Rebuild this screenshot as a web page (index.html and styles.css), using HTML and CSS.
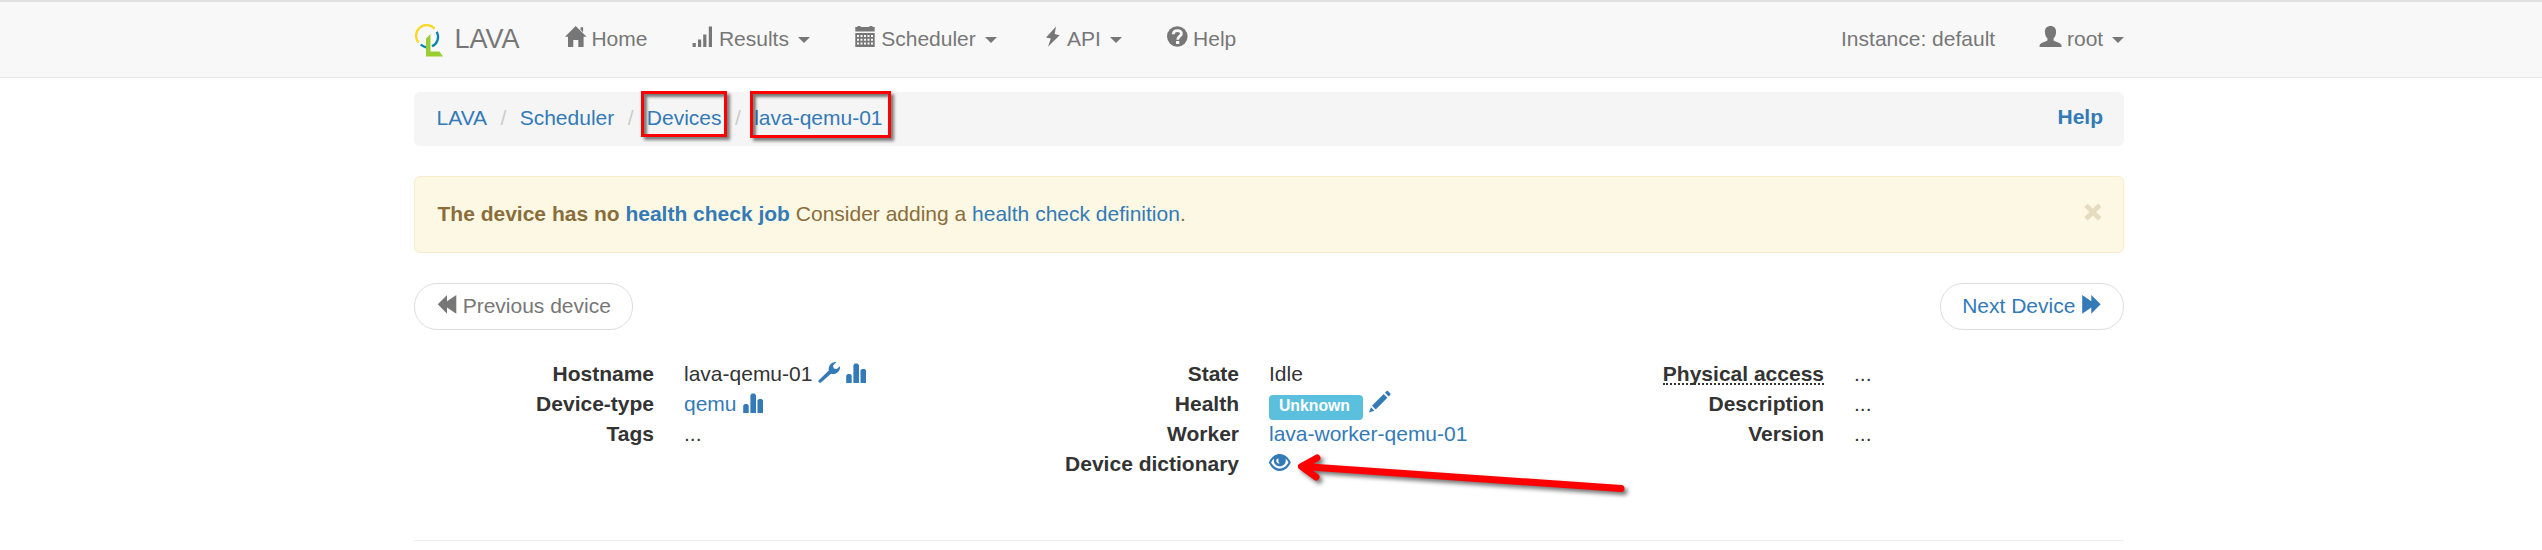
FILE: index.html
```html
<!DOCTYPE html>
<html lang="en">
<head>
<meta charset="utf-8">
<title>LAVA device lava-qemu-01</title>
<link rel="stylesheet" href="styles.css">
</head>
<body>
<svg class="defs" aria-hidden="true">
  <symbol id="home" viewBox="0 0 21 21"><path d="M10.700-.9 21.600 9.700h-3V20h-5.300v-7H8.300v7H3V9.700H0L10.700-.9zM15.500.2h2.600v5l-2.600-2.500z"/></symbol>
  <symbol id="signal" viewBox="0 0 21 21"><path d="M.6 16h3.200v4H.6zM6 12.500h3.200V20H6zM11.200 7.500h3.200V20h-3.200zM16.800-.5H20V20h-3.200z"/></symbol>
  <symbol id="calendar" viewBox="0 0 21 21"><path fill-rule="evenodd" d="M.3 0h2.200v-1h3V0h9v-1h3V0h2.200v4.500H.3zM.3 6h19.400v14H.3zM2 8v2h2V8zm3.500 0v2h2V8zM9 8v2h2V8zm3.500 0v2h2V8zM16 8v2h2V8zM2 11.700v2h2v-2zm3.500 0v2h2v-2zm3.500 0v2h2v-2zm3.500 0v2h2v-2zm3.500 0v2h2v-2zM2 15.500v2h2v-2zm3.500 0v2h2v-2zm3.500 0v2h2v-2zm3.500 0v2h2v-2zm3.500 0v2h2v-2z"/></symbol>
  <symbol id="flash" viewBox="0 0 21 21"><path d="M14-.5 4 10.500l4.800 1L6 19.800 17.700 8.200l-5-1.200z"/></symbol>
  <symbol id="question" viewBox="0 0 21 21"><circle cx="10.300" cy="9.500" r="10.300"/><path fill="none" stroke="#f8f8f8" stroke-width="2.800" d="M6.300 7.200c.2-5 8.400-4.500 8.100-.3-.2 2.400-3.700 2.300-3.700 5.800"/><path fill="#f8f8f8" d="M9 14h3.300v3H9z"/></symbol>
  <symbol id="user" viewBox="0 0 21 21"><path d="M10.500-1c3.500 0 5.800 2.300 5.600 6-.1 2.900-1 5-2.500 6.300v2.200c2 1.400 7.600 2.400 7.900 4.800V20H-.4v-1.700c.3-2.400 5.800-3.400 7.800-4.800v-2.200C5.900 10 5 7.900 4.900 5c-.2-3.700 2.100-6 5.600-6z"/></symbol>
  <symbol id="backward" viewBox="0 0 21 21"><path d="M.8 10.300 10 1v6.300L19.300 1v18.700L10 13.500v6.200z"/></symbol>
  <symbol id="forward" viewBox="0 0 21 21"><path d="M19.600 10.300 10.300 1v6.300L1.200 1v18.700l9.100-6.200v6.200z"/></symbol>
  <symbol id="wrench" viewBox="0 0 21 21"><path d="m.8 18.300 10-9.800C10 4.500 12.800-.5 18.500-.1L15 3.600l.8 2.800 2.900.7L22 4.300c.5 5.300-4 8.800-9 7.500l-9.700 8.500c-1.500 1.400-4-.5-2.500-2z"/></symbol>
  <symbol id="stats" viewBox="0 0 21 21"><path d="M1.200 21v-7.500l1.500-1.500h2.600l1.400 1.500V21zM8.400 21V3.200l1.400-1.600h2.800L14 3.200V21zM15.500 21V8.300L17 7h2.700l1.300 1.300V21z"/></symbol>
  <symbol id="pencil" viewBox="0 0 21 21"><path d="m16 .7 1.400-1.500c.5-.5 1.200-.5 1.700 0l2.100 2.100c.5.500.5 1.100 0 1.600L19.700 4.400zM14.700 2l3.700 3.700L6.700 17.500 3 13.800zM2 15.200l3.400 3.500L0 20.500z"/></symbol>
  <symbol id="eye" viewBox="0 0 21 21"><path fill-rule="evenodd" d="M10.800 2C16 2 19.600 5.800 21.800 10.500 19.600 15.200 16 19 10.800 19S2 15.200-.2 10.500C2 5.800 5.600 2 10.800 2zM5 6.500C3.800 7.600 2.800 9 2.100 10.500c1.800 3.400 5 6 8.700 6s6.900-2.600 8.700-6c-.7-1.500-1.700-2.900-2.900-4 .8 4.400-1.600 7.700-5.800 7.700S4.200 10.900 5 6.500zM9.700 6.500C7.700 6.500 6.900 8 7.500 9.700c.6 1.400 1.900 2 3.100 1.700-1.300-1-1.600-2.900-.9-4.900z"/></symbol>
</svg>

<header class="navbar">
  <nav class="nav">
    <a class="brand">
      <svg class="logo" viewBox="0 0 30 34">
        <g fill="none" stroke-width="2.300"><path stroke="#fcd725" d="M4.600 18.500A10.400 10.400 0 0 1 20.700 4.800"/><path stroke="#0b86b4" d="M22.700 7.700A10.400 10.400 0 0 1 18 22.300M6.700 20.500a10.400 10.400 0 0 0 5.500 2.800"/></g>
        <path fill="#9acd32" d="M12 14.500 16.500 10v17.500h9L29 32.500H12z"/>
      </svg>
      <span>LAVA</span>
    </a>
    <a class="item"><svg class="icon"><use href="#home"/></svg> Home</a>
    <a class="item"><svg class="icon"><use href="#signal"/></svg> Results <b class="caret"></b></a>
    <a class="item"><svg class="icon"><use href="#calendar"/></svg> Scheduler <b class="caret"></b></a>
    <a class="item"><svg class="icon"><use href="#flash"/></svg> API <b class="caret"></b></a>
    <a class="item"><svg class="icon"><use href="#question"/></svg> Help</a>
    <span class="item push">Instance: default</span>
    <a class="item last"><svg class="icon"><use href="#user"/></svg> root <b class="caret"></b></a>
  </nav>
</header>

<main class="container">
  <div class="breadcrumb">
    <a>LAVA</a><i>/</i><a>Scheduler</a><i>/</i><a class="marked">Devices<span class="mark mark-devices"></span></a><i>/</i><a class="marked">lava-qemu-01<span class="mark mark-name"></span></a>
    <a class="help">Help</a>
  </div>

  <div class="alert">
    <p><strong>The device has no <a>health check job</a></strong> Consider adding a <a>health check definition</a>.</p>
    <span class="close">×</span>
  </div>

  <div class="pager">
    <a class="pill muted"><svg class="icon"><use href="#backward"/></svg> Previous device</a>
    <a class="pill">Next Device <svg class="icon"><use href="#forward"/></svg></a>
  </div>

  <div class="details">
    <dl>
      <dt>Hostname</dt><dd>lava-qemu-01 <a><svg class="icon"><use href="#wrench"/></svg></a> <a><svg class="icon"><use href="#stats"/></svg></a></dd>
      <dt>Device-type</dt><dd><a>qemu</a> <a><svg class="icon"><use href="#stats"/></svg></a></dd>
      <dt>Tags</dt><dd>...</dd>
    </dl>
    <dl>
      <dt>State</dt><dd>Idle</dd>
      <dt>Health</dt><dd class="health"><span class="label">Unknown</span><a><svg class="icon"><use href="#pencil"/></svg></a></dd>
      <dt>Worker</dt><dd><a>lava-worker-qemu-01</a></dd>
      <dt>Device dictionary</dt>
      <dd class="dictionary"><a><svg class="icon"><use href="#eye"/></svg></a>
        <svg class="arrow" viewBox="0 0 350 60"><path fill="none" stroke="#f00" stroke-width="7" stroke-linecap="round" stroke-linejoin="round" d="M5 17.500 323 39.500M19 9 3.500 17.500 18 28"/></svg>
      </dd>
    </dl>
    <dl>
      <dt><abbr>Physical access</abbr></dt><dd>...</dd>
      <dt>Description</dt><dd>...</dd>
      <dt>Version</dt><dd>...</dd>
    </dl>
  </div>
  <hr>
</main>
</body>
</html>
```
FILE: styles.css
```css
* { box-sizing: border-box; }
body {
  margin: 0;
  height: 550px;
  overflow: hidden;
  background: #fff;
  color: #333;
  font: 21px/30px "Liberation Sans", Arial, sans-serif;
}
a { color: #337ab7; text-decoration: none; }
.defs { display: none; }
.icon {
  width: 21px;
  height: 21px;
  fill: currentColor;
  overflow: visible;
  vertical-align: -2px;
}
symbol { overflow: visible; }

.navbar {
  height: 78px;
  border-top: 2px solid #e1e1e1;
  border-bottom: 1px solid #e7e7e7;
  background: #f8f8f8;
}
.nav {
  display: flex;
  width: 1710px;
  height: 75px;
  margin-left: 414px;
  padding-top: 22px;
}
.nav, .nav a { color: #777; }
.brand { display: flex; width: 128.5px; font-size: 27px; }
.logo { width: 30px; height: 34px; margin-right: 10.5px; }
.item { padding: 0 22.5px; white-space: nowrap; }
.item .icon { margin-right: -.4px; }
.push { margin-left: auto; }
.last { padding-right: 0; }
.last .icon { margin-right: 0; }
.caret {
  display: inline-block;
  margin-left: 3px;
  border: 6px solid transparent;
  border-top-color: currentColor;
  border-bottom: 0;
  vertical-align: middle;
}

.container { width: 1710px; margin-left: 414px; }
.breadcrumb {
  display: flex;
  height: 54px;
  margin-top: 14px;
  padding: 11px 21px 0 22.5px;
  border-radius: 6px;
  background: #f5f5f5;
}
.breadcrumb i { width: 32.6px; text-align: center; font-style: normal; color: #ccc; }
.marked { position: relative; }
.mark {
  position: absolute;
  border: 3px solid #f00;
  box-shadow: 3px 3px 3px rgba(0, 0, 0, .5), inset 3px 3px 3px rgba(0, 0, 0, .5);
}
.mark-devices { left: -6px; top: -12px; width: 86px; height: 46px; }
.mark-name { left: -4px; top: -12px; width: 141px; height: 47px; }
.help { margin: -1px 0 0 auto; font-weight: bold; }

.alert {
  display: flex;
  justify-content: space-between;
  height: 77px;
  margin-top: 30px;
  padding: 22px 21.5px 0 22.5px;
  border: 1px solid #faebcc;
  border-radius: 6px;
  background: #fcf8e3;
  color: #8a6d3b;
}
.alert p { margin: 0; }
.close {
  color: #8a6d3b;
  font-size: 30px;
  font-weight: bold;
  line-height: 26px;
  opacity: .2;
  -webkit-text-stroke: 1.5px #8a6d3b;
}

.pager { display: flex; justify-content: space-between; margin-top: 30px; }
.pill {
  height: 47px;
  padding: 7px 21.5px;
  border: 1px solid #ddd;
  border-radius: 23px;
}
.pill .icon { margin-right: -.7px; }
.muted { color: #777; }

.details { display: grid; grid-template-columns: 585px 585px 540px; height: 181px; margin-top: 29px; }
dl {
  display: grid;
  grid-template-columns: 240px auto;
  grid-auto-rows: 30px;
  column-gap: 30px;
  align-content: start;
  margin: 0;
}
dt { font-weight: bold; text-align: right; }
dd { margin: 0; white-space: nowrap; }
abbr {
  display: inline-block;
  height: 26px;
  border-bottom: 2px dotted #333;
}
.health { display: flex; align-items: flex-start; }
.label {
  width: 94px;
  height: 25px;
  margin: 6px 6px 0 0;
  padding-left: 10px;
  border-radius: 4px;
  background: #5bc0de;
  color: #fff;
  font-size: 15.75px;
  font-weight: bold;
  line-height: 22px;
}
.dictionary { position: relative; }
.arrow {
  position: absolute;
  left: 29px;
  top: 0;
  width: 350px;
  height: 60px;
  overflow: visible;
  filter: drop-shadow(3px 3px 2px rgba(0, 0, 0, .55));
}
hr { height: 1px; margin: 0; border: 0; background: #eee; }
```
